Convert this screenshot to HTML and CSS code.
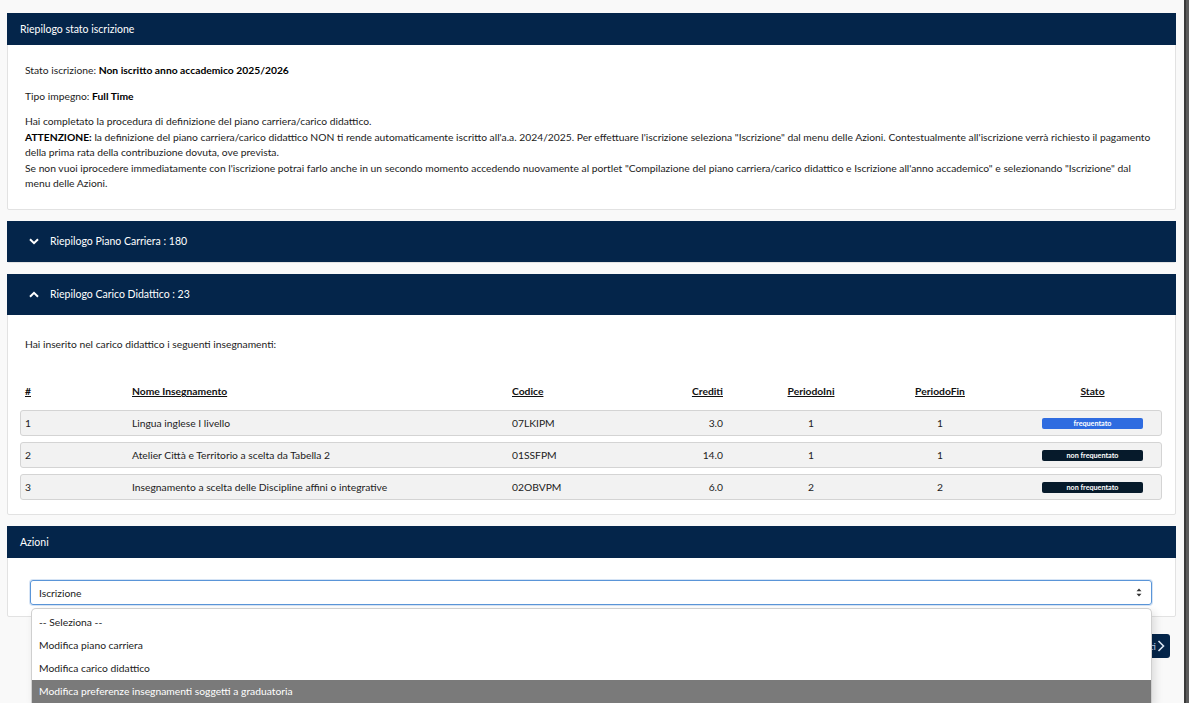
FILE: index.html
```html
<!DOCTYPE html>
<html lang="it">
<head>
  <meta charset="UTF-8" />
  <meta name="viewport" content="width=device-width, initial-scale=1" />
  <title>Riepilogo stato iscrizione</title>
  <link rel="stylesheet" href="styles.css">
</head>
<body>
  <div class="page">
    <main class="content">

      <section class="panel">
        <div class="panel-head">Riepilogo stato iscrizione</div>
        <div class="panel-body summary">
          <p>Stato iscrizione: <strong>Non iscritto anno accademico 2025/2026</strong></p>
          <p>Tipo impegno: <strong>Full Time</strong></p>
          <p>
            Hai completato la procedura di definizione del piano carriera/carico didattico.<br>
            <strong>ATTENZIONE:</strong> la definizione del piano carriera/carico didattico NON ti rende automaticamente iscritto all'a.a. 2024/2025. Per effettuare l'iscrizione seleziona "Iscrizione" dal menu delle Azioni. Contestualmente all'iscrizione verrà richiesto il pagamento della prima rata della contribuzione dovuta, ove prevista.<br>
            Se non vuoi iprocedere immediatamente con l'iscrizione potrai farlo anche in un secondo momento accedendo nuovamente al portlet "Compilazione del piano carriera/carico didattico e Iscrizione all'anno accademico" e selezionando "Iscrizione" dal menu delle Azioni.
          </p>
        </div>
      </section>

      <section class="panel">
        <div class="panel-head toggle">
          <svg class="chev" viewBox="0 0 10 7" width="10" height="7"><path d="M1 1.2 L5 5.2 L9 1.2" /></svg>
          Riepilogo Piano Carriera : 180
        </div>
      </section>

      <section class="panel">
        <div class="panel-head toggle">
          <svg class="chev" viewBox="0 0 10 7" width="10" height="7"><path d="M1 5.8 L5 1.8 L9 5.8" /></svg>
          Riepilogo Carico Didattico : 23
        </div>
        <div class="panel-body carico">
          <p>Hai inserito nel carico didattico i seguenti insegnamenti:</p>

          <div class="grid-table">
            <div class="grid-row head">
              <span>#</span>
              <span>Nome Insegnamento</span>
              <span>Codice</span>
              <span class="num">Crediti</span>
              <span class="mid">PeriodoIni</span>
              <span class="mid">PeriodoFin</span>
              <span class="state">Stato</span>
            </div>
            <div class="grid-row">
              <span>1</span>
              <span>Lingua inglese I livello</span>
              <span>07LKIPM</span>
              <span class="num">3.0</span>
              <span class="mid">1</span>
              <span class="mid">1</span>
              <span class="state"><b class="badge on">frequentato</b></span>
            </div>
            <div class="grid-row">
              <span>2</span>
              <span>Atelier Città e Territorio a scelta da Tabella 2</span>
              <span>01SSFPM</span>
              <span class="num">14.0</span>
              <span class="mid">1</span>
              <span class="mid">1</span>
              <span class="state"><b class="badge off">non frequentato</b></span>
            </div>
            <div class="grid-row">
              <span>3</span>
              <span>Insegnamento a scelta delle Discipline affini o integrative</span>
              <span>02OBVPM</span>
              <span class="num">6.0</span>
              <span class="mid">2</span>
              <span class="mid">2</span>
              <span class="state"><b class="badge off">non frequentato</b></span>
            </div>
          </div>
        </div>
      </section>

      <section class="panel">
        <div class="panel-head">Azioni</div>
        <div class="panel-body azioni">
          <div class="select-wrap">
            <div class="select">
              <span>Iscrizione</span>
              <svg viewBox="0 0 6 9" width="6" height="9"><path d="M3 0.5 L5.5 3.3 H0.5 Z M3 8.5 L5.5 5.7 H0.5 Z" fill="#333" /></svg>
            </div>
            <ul class="dropdown">
              <li>-- Seleziona --</li>
              <li>Modifica piano carriera</li>
              <li>Modifica carico didattico</li>
              <li class="active">Modifica preferenze insegnamenti soggetti a graduatoria</li>
            </ul>
          </div>
        </div>
      </section>

      <div class="actions">
        <button class="btn">Avanti
          <svg viewBox="0 0 8 12" width="8" height="12"><path d="M1.5 1 L6.5 6 L1.5 11" /></svg>
        </button>
      </div>

    </main>
    <div class="scrollbar"></div>
  </div>
</body>
</html>
```

FILE: styles.css
```css
*, *::before, *::after {
  box-sizing: border-box;
}

html, body {
  margin: 0;
  height: 100%;
  overflow: hidden;
}

body {
  font-family: 'Lato', 'Segoe UI', sans-serif;
  font-size: 10.3px;
  color: #1c1c1c;
  background: #f9f9f9;
}

.page {
  display: flex;
  height: 100%;
}

.content {
  flex: 1;
  padding: 13px 8px 0 7px;
  display: flex;
  flex-direction: column;
  gap: 11px;
}

.scrollbar {
  width: 5px;
  border-left: 2px solid #3a3a3a;
  background: #5c5c5c;
}

/* Pannelli */
.panel {
  background: #fff;
  border: 1px solid #e2e2e2;
  border-radius: 2px;
}

.panel-head {
  background: #04254a;
  color: #fff;
  height: 32px;
  padding: 0 12px 0 13px;
  font-size: 10.5px;
  display: flex;
  align-items: center;
  margin: -1px -1px 0;
}

.panel-head.toggle {
  height: 41px;
  padding-left: 22px;
  gap: 11px;
}

.chev {
  fill: none;
  stroke: #fff;
  stroke-width: 2;
}

.panel-body {
  padding: 0 19px 0 17px;
}

.panel-body p {
  margin: 0;
  line-height: 15.5px;
}

.summary {
  padding-top: 18px;
  padding-bottom: 17px;
}

.summary p + p {
  margin-top: 10px;
}

.summary strong {
  font-weight: 700;
  color: #000;
}

/* Carico didattico */
.carico {
  padding: 22px 13px 14px 12px;
}

.carico > p {
  padding-left: 5px;
  margin-bottom: 29px;
}

.grid-table {
  display: flex;
  flex-direction: column;
  gap: 6px;
}

.grid-row {
  display: grid;
  grid-template-columns: 107px 380px 140px 71px 176px 82px 1fr;
  align-items: center;
  height: 26px;
  padding-left: 4px;
  background: #f2f2f2;
  border: 1px solid #d4d4d4;
  border-radius: 3px;
}

.grid-row.head {
  background: none;
  border-color: transparent;
  height: 20px;
  margin-bottom: 3px;
  font-weight: 700;
  color: #111;
}

.grid-row.head span {
  text-decoration: underline;
}

.grid-row .num {
  text-align: right;
}

.grid-row .mid {
  text-align: center;
}

.grid-row .state {
  text-align: center;
  padding-left: 43px;
}

.badge {
  display: block;
  margin: 0 auto;
  width: 101px;
  height: 11px;
  line-height: 11px;
  border-radius: 2px;
  font-size: 7.2px;
  font-weight: 700;
  color: #fff;
}

.badge.on {
  background: #2f6ce0;
}

.badge.off {
  background: #061a2b;
}

/* Azioni */
.azioni {
  padding: 22px 23px 11px 22px;
}

.select-wrap {
  position: relative;
}

.select {
  height: 25px;
  border: 1px solid #5a95d8;
  border-radius: 3px;
  box-shadow: 0 0 0 1px rgba(90, 149, 216, 0.25);
  display: flex;
  align-items: center;
  justify-content: space-between;
  padding: 0 9px 0 8px;
  color: #222;
}

.dropdown {
  position: absolute;
  top: 28px;
  left: 1px;
  right: 0;
  margin: 0;
  padding: 2px 0 0;
  list-style: none;
  background: #fff;
  border: 1px solid #cfcfcf;
  border-bottom: none;
  border-radius: 5px 5px 0 0;
  box-shadow: 3px 3px 8px rgba(0, 0, 0, 0.12);
  z-index: 5;
}

.dropdown li {
  height: 23px;
  line-height: 23px;
  padding-left: 7px;
  color: #222;
}

.dropdown li.active {
  background: #7a7a7a;
  color: #fff;
}

.actions {
  display: flex;
  justify-content: flex-end;
  padding-right: 6px;
  margin-top: 6px;
}

.btn {
  background: #04254a;
  color: #b9d3f0;
  border: none;
  border-radius: 3px;
  height: 24px;
  padding: 0 5px 0 10px;
  font-family: inherit;
  font-size: 10px;
  display: flex;
  align-items: center;
  gap: 1px;
}

.btn svg {
  fill: none;
  stroke: #dce8f6;
  stroke-width: 1.6;
}
```
